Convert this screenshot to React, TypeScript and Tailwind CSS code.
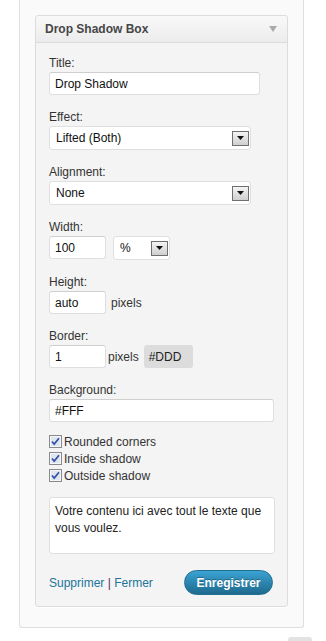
import React from "react";

const font = "font-['Liberation_Sans',Arial,sans-serif]";

const SelectArrow = () => (
  <span className="flex h-[15px] w-[17px] items-center justify-center border border-[#6f6f6f] bg-gradient-to-b from-[#f4f4f4] to-[#cfcfcf]">
    <svg width="7" height="4" viewBox="0 0 7 4">
      <path d="M0 0h7L3.5 4z" fill="#111" />
    </svg>
  </span>
);

const Field = ({ label, children }: { label: string; children: React.ReactNode }) => (
  <div className="mb-[14px]">
    <div className="h-[17px] leading-[17px] text-[#333]">{label}</div>
    {children}
  </div>
);

const TextInput = ({ value, className = "" }: { value: string; className?: string }) => (
  <div
    className={`flex h-[23px] items-center rounded-[3px] border border-[#dfdfdf] border-t-[#cfcfcf] bg-white pl-[5px] text-[#111] ${className}`}
  >
    {value}
  </div>
);

const Select = ({ value, className = "" }: { value: string; className?: string }) => (
  <div
    className={`flex h-[24px] items-center justify-between rounded-[3px] border border-[#dfdfdf] bg-white pl-[6px] pr-[1px] text-[#111] ${className}`}
  >
    <span>{value}</span>
    <SelectArrow />
  </div>
);

const Check = ({ label }: { label: string }) => (
  <div className="flex h-[17px] items-center gap-[2px] text-[#333]">
    <svg width="13" height="13" viewBox="0 0 13 13" className="shrink-0">
      <rect x="0.5" y="0.5" width="12" height="12" fill="#dfe6ef" stroke="#8a8a8a" />
      <rect x="1.5" y="1.5" width="10" height="10" fill="none" stroke="#f4f6fa" />
      <path d="M3 6.5l2.2 2.6L10 3.2" fill="none" stroke="#3552a8" strokeWidth="1.7" />
    </svg>
    <span>{label}</span>
  </div>
);

const App = () => {
  return (
    <div className={`h-[641px] w-[326px] overflow-hidden bg-white text-[12px] ${font}`}>
      <div className="ml-[19px] w-[285px] rounded-b-[3px] border-x border-b border-[#dfdfdf] bg-[#fafafa] px-[15px] pb-[20px] pt-[15px]">
        <div className="rounded-[3px] border border-[#dcdcdc] bg-[#f4f4f4] shadow-[0_1px_0_#fff]">
          <div className="flex h-[27px] items-center justify-between rounded-t-[3px] border-b border-[#dcdcdc] bg-gradient-to-b from-[#f9f9f9] to-[#ececec] pl-[9px] pr-[10px]">
            <span className="font-bold text-[#464646]">Drop Shadow Box</span>
            <svg width="8" height="6" viewBox="0 0 8 6">
              <path d="M0 0h8L4 6z" fill="#a9a9a9" />
            </svg>
          </div>

          <div className="px-[13px] pb-[11px] pt-[12px]">
            <Field label="Title:">
              <TextInput value="Drop Shadow" className="w-[211px]" />
            </Field>
            <Field label="Effect:">
              <Select value="Lifted (Both)" className="w-[202px]" />
            </Field>
            <Field label="Alignment:">
              <Select value="None" className="w-[202px]" />
            </Field>
            <Field label="Width:">
              <div className="flex gap-[7px]">
                <TextInput value="100" className="w-[57px]" />
                <Select value="%" className="w-[57px]" />
              </div>
            </Field>
            <Field label="Height:">
              <div className="flex items-center gap-[5px]">
                <TextInput value="auto" className="w-[57px]" />
                <span className="text-[#333]">pixels</span>
              </div>
            </Field>
            <Field label="Border:">
              <div className="flex items-center">
                <TextInput value="1" className="w-[57px]" />
                <span className="ml-[2px] text-[#333]">pixels</span>
                <span className="ml-[5px] flex h-[23px] w-[49px] items-center rounded-[3px] bg-[#dcdcdc] pl-[5px] text-[#222]">
                  #DDD
                </span>
              </div>
            </Field>
            <Field label="Background:">
              <TextInput value="#FFF" className="w-[225px] pl-[4px]" />
            </Field>

            <div className="-mt-[3px]">
              <Check label="Rounded corners" />
              <Check label="Inside shadow" />
              <Check label="Outside shadow" />
            </div>

            <div className="mt-[13px] h-[57px] w-[226px] rounded-[3px] border border-[#dfdfdf] bg-white px-[5px] pt-[5px] leading-[17px] text-[#222]">
              Votre contenu ici avec tout le texte que vous voulez.
            </div>

            <div className="mt-[16px] flex items-center justify-between pr-[1px]">
              <div className="text-[#21759b]">
                Supprimer <span className="text-[#5e2a54]">|</span> Fermer
              </div>
              <button className="h-[25px] w-[89px] rounded-full border border-[#1f6f93] bg-gradient-to-b from-[#3aa3d3] to-[#1f6a8e] font-bold text-white [text-shadow:0_-1px_0_rgba(0,0,0,0.3)]">
                Enregistrer
              </button>
            </div>
          </div>
        </div>
      </div>
      <div className="ml-[288px] mt-[9px] h-[10px] w-[24px] rounded-t-[3px] bg-[#e3e3e3]" />
    </div>
  );
};

export default App;
